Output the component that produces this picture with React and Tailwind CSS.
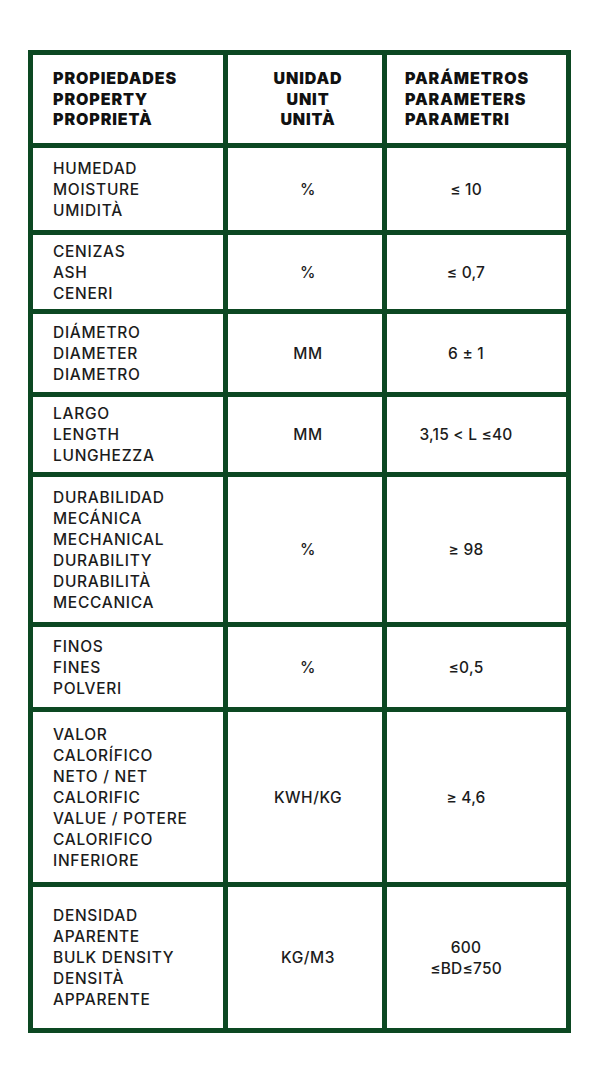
const rows = [
  { h: "h-[82px]", p: ["HUMEDAD", "MOISTURE", "UMIDITÀ"], u: ["%"], v: ["≤ 10"] },
  { h: "h-[74px]", p: ["CENIZAS", "ASH", "CENERI"], u: ["%"], v: ["≤ 0,7"] },
  { h: "h-[78px]", p: ["DIÁMETRO", "DIAMETER", "DIAMETRO"], u: ["MM"], v: ["6 ± 1"] },
  { h: "h-[75px]", p: ["LARGO", "LENGTH", "LUNGHEZZA"], u: ["MM"], v: ["3,15 < L ≤40"] },
  { h: "h-[145px]", p: ["DURABILIDAD", "MECÁNICA", "MECHANICAL", "DURABILITY", "DURABILITÀ", "MECCANICA"], u: ["%"], v: ["≥ 98"] },
  { h: "h-[80px]", p: ["FINOS", "FINES", "POLVERI"], u: ["%"], v: ["≤0,5"] },
  { h: "h-[170px]", p: ["VALOR", "CALORÍFICO", "NETO / NET", "CALORIFIC", "VALUE / POTERE", "CALORIFICO", "INFERIORE"], u: ["KWH/KG"], v: ["≥ 4,6"] },
  { h: "h-[141px]", p: ["DENSIDAD", "APARENTE", "BULK DENSITY", "DENSITÀ", "APPARENTE"], u: ["KG/M3"], v: ["600", "≤BD≤750"] },
];

function Lines({ items }) {
  return items.map((t, i) => <div key={i}>{t}</div>);
}

export default function App() {
  return (
    <div className="w-[600px] h-[1083px] bg-white pt-[50px] pl-[28px]" style={{ fontFamily: "Inter, 'Liberation Sans', sans-serif" }}>
      <div className="grid grid-cols-[190px_154px_179px] gap-[5px] bg-[#0c4822] p-[5px] w-[543px]">
        <div className="h-[88px] bg-white flex flex-col justify-center pl-[20px] text-[16px] leading-[20.5px] font-black text-[#111] tracking-[0.9px]">
          <Lines items={["PROPIEDADES", "PROPERTY", "PROPRIETÀ"]} />
        </div>
        <div className="h-[88px] bg-white flex flex-col justify-center items-center pl-[6px] text-[16px] leading-[20.5px] font-black text-[#111] text-center tracking-[0.9px]">
          <Lines items={["UNIDAD", "UNIT", "UNITÀ"]} />
        </div>
        <div className="h-[88px] bg-white flex flex-col justify-center pl-[18px] text-[16px] leading-[20.5px] font-black text-[#111] tracking-[0.9px]">
          <Lines items={["PARÁMETROS", "PARAMETERS", "PARAMETRI"]} />
        </div>
        {rows.map((r, i) => (
          <div key={i} className="contents">
            <div className={`${r.h} bg-white flex flex-col justify-center pl-[20px] text-[15.5px] leading-[21px] font-medium text-[#1c1c1c] tracking-[0.7px]`}>
              <Lines items={r.p} />
            </div>
            <div className={`${r.h} bg-white flex flex-col justify-center items-center pl-[6px] text-[15.5px] leading-[21px] font-medium text-[#1c1c1c] text-center tracking-[0.5px]`}>
              <Lines items={r.u} />
            </div>
            <div className={`${r.h} bg-white flex flex-col justify-center items-center pr-[21px] text-[15.5px] leading-[21px] font-medium text-[#1c1c1c] text-center tracking-[0.2px]`}>
              <Lines items={r.v} />
            </div>
          </div>
        ))}
      </div>
    </div>
  );
}
